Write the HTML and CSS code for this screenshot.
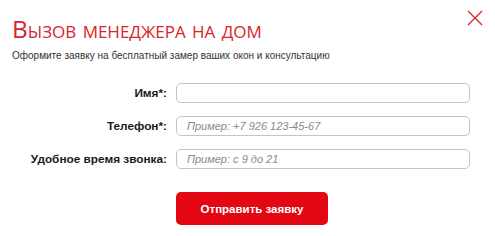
FILE: index.html
```html
<!DOCTYPE html>
<html lang="ru">
<head>
    <meta charset="UTF-8">
    <meta name="viewport" content="width=device-width, initial-scale=1.0">
    <link rel="stylesheet" href="styles.css">
</head>
<body>
    <div class="popup">
        <button class="popup-close" type="button" aria-label="Закрыть">
            <svg viewBox="0 0 16 16" width="16" height="16" fill="none" stroke="#d9232a" stroke-width="1.3">
                <path d="M1 1L15 15M15 1L1 15"></path>
            </svg>
        </button>

        <h2 class="popup-title">Вызов менеджера на дом</h2>
        <p class="popup-sub">Оформите заявку на бесплатный замер ваших окон и консультацию</p>

        <form class="callback-form">
            <label class="form-label" for="cb-name">Имя*:</label>
            <input class="form-input" id="cb-name" type="text">

            <label class="form-label" for="cb-phone">Телефон*:</label>
            <input class="form-input" id="cb-phone" type="text" placeholder="Пример: +7 926 123-45-67">

            <label class="form-label" for="cb-time">Удобное время звонка:</label>
            <input class="form-input" id="cb-time" type="text" placeholder="Пример: с 9 до 21">

            <span></span>
            <button class="form-submit" type="button">Отправить заявку</button>
        </form>
    </div>
</body>
</html>
```

FILE: styles.css
```css
body {
    margin: 0;
    background: #fff;
    font-family: "Liberation Sans", Arial, sans-serif;
}

.popup {
    position: relative;
    width: 495px;
    height: 236px;
    box-sizing: border-box;
    padding: 15px 12px 0;
}

.popup-close {
    position: absolute;
    top: 10px;
    right: 12px;
    padding: 0;
    border: 0;
    background: none;
    line-height: 0;
    cursor: pointer;
}

.popup-title {
    margin: 0;
    font-family: "Open Sans", sans-serif;
    font-size: 24.4px;
    font-weight: 400;
    font-variant: small-caps;
    line-height: 28px;
    color: #d9232a;
}

.popup-sub {
    margin: 6px 0 0;
    font-size: 10px;
    line-height: 14px;
    color: #333;
}

.callback-form {
    display: grid;
    grid-template-columns: 155px 294px;
    column-gap: 9px;
    row-gap: 13px;
    align-items: center;
    margin-top: 20px;
}

.form-label {
    text-align: right;
    font-size: 11.8px;
    font-weight: 700;
    color: #1a1a1a;
}

.form-input {
    box-sizing: border-box;
    width: 294px;
    height: 20px;
    padding: 0 10px;
    border: 1px solid #c4c4c4;
    border-radius: 5px;
    font-family: "Liberation Sans", Arial, sans-serif;
    font-size: 11px;
    outline: none;
}

.form-input::placeholder {
    font-style: italic;
    color: #8a8a8a;
}

.form-submit {
    width: 152px;
    height: 33px;
    margin-top: 10px;
    border: 0;
    border-radius: 5px;
    background: #e30613;
    color: #fff;
    font-family: "Liberation Sans", Arial, sans-serif;
    font-size: 11.5px;
    font-weight: 700;
    cursor: pointer;
}
```
